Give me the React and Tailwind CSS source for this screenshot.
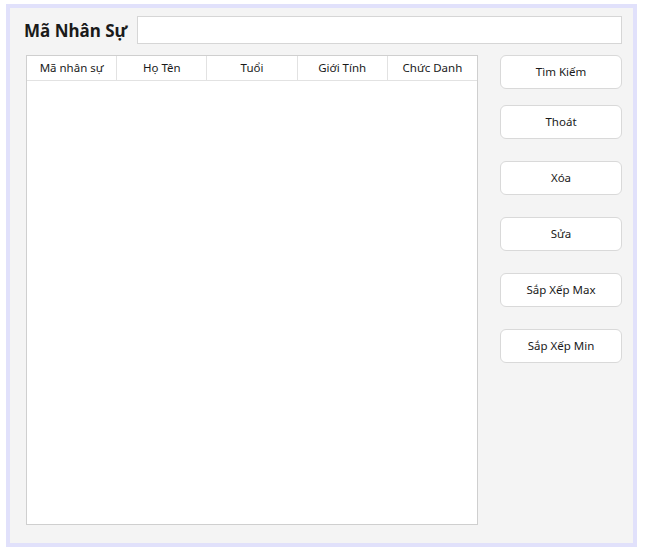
import React from "react";

const cols = ["Mã nhân sự", "Họ Tên", "Tuổi", "Giới Tính", "Chức Danh"];

function Btn({ children, className = "" }) {
  return (
    <button
      className={
        "w-[122px] h-[34px] rounded-[6px] border border-[#d9d9d9] bg-white text-[11.5px] text-[#1a1a1a] flex items-center justify-center " +
        className
      }
    >
      {children}
    </button>
  );
}

export default function App() {
  return (
    <div
      className="w-[648px] h-[553px] bg-white pt-[4px] pl-[6px]"
      style={{ fontFamily: '"Noto Sans", "Open Sans", sans-serif' }}
    >
      <div className="w-[631px] h-[543px] border-4 border-[#e1e1fb] bg-[#f4f4f4] flex flex-col">
        <div className="flex items-center mt-[8px] h-[28px]">
          <span className="ml-[14px] text-[17px] font-bold text-[#1a1a1a] leading-none">
            Mã Nhân Sự
          </span>
          <div className="ml-auto mr-[11px] w-[485px] h-[28px] bg-white border border-[#d6d6d6]"></div>
        </div>
        <div className="flex mt-[11px]">
          <div className="ml-[16px] w-[452px] h-[470px] bg-white border border-[#cfcfcf] flex flex-col">
            <div className="flex h-[25px] border-b border-[#e2e2e2]">
              {cols.map((c, i) => (
                <div
                  key={c}
                  className={
                    "flex-1 flex items-center justify-center text-[11.5px] text-[#1a1a1a] " +
                    (i < cols.length - 1 ? "border-r border-[#e2e2e2]" : "")
                  }
                >
                  {c}
                </div>
              ))}
            </div>
          </div>
          <div className="ml-[22px] flex flex-col">
            <Btn>Tìm Kiếm</Btn>
            <Btn className="mt-[16px]">Thoát</Btn>
            <Btn className="mt-[22px]">Xóa</Btn>
            <Btn className="mt-[22px]">Sửa</Btn>
            <Btn className="mt-[22px]">Sắp Xếp Max</Btn>
            <Btn className="mt-[22px]">Sắp Xếp Min</Btn>
          </div>
        </div>
      </div>
    </div>
  );
}
